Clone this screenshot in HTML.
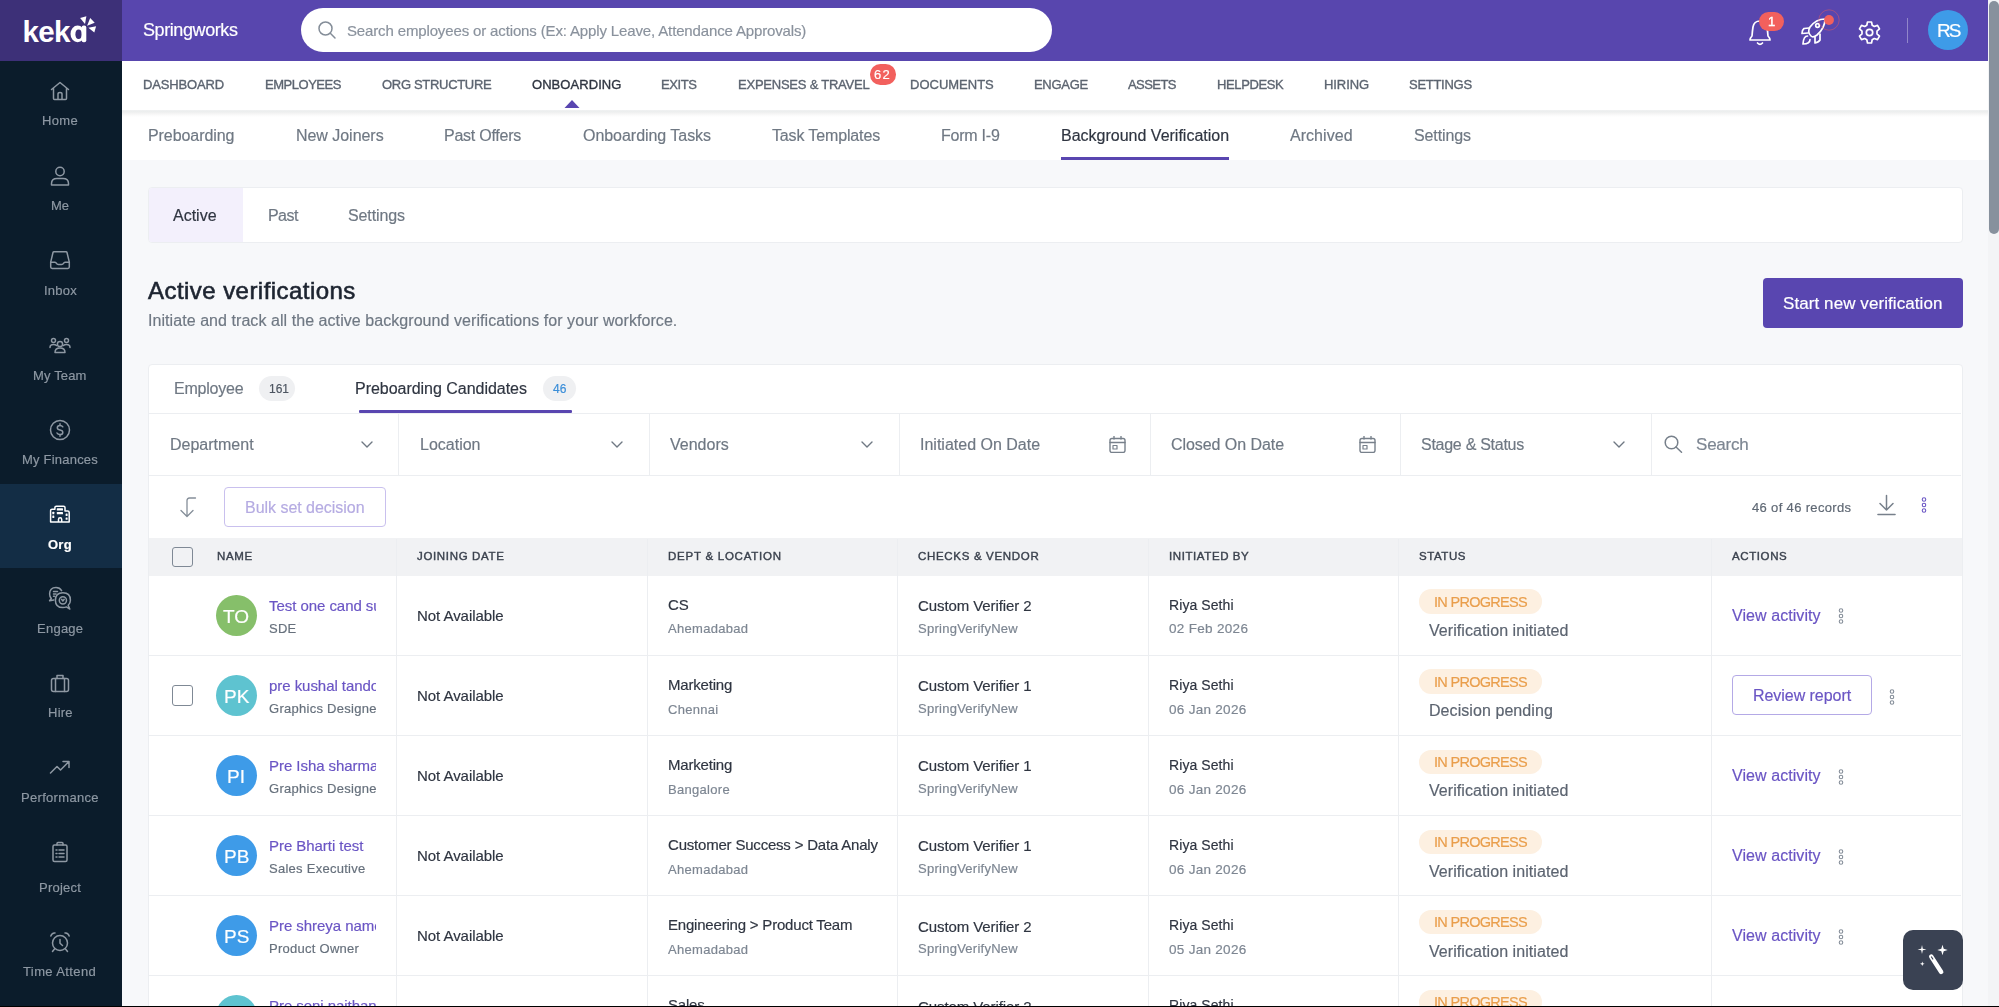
<!DOCTYPE html>
<html><head><meta charset="utf-8"><style>
html,body{margin:0;padding:0;width:1999px;height:1007px;overflow:hidden;background:#f7f8fa;}
body{position:relative;font-family:"Liberation Sans",sans-serif;}
.t{position:absolute;white-space:nowrap;line-height:1;-webkit-text-stroke:0.18px currentColor;will-change:transform;}
.b{position:absolute;}
</style></head><body>
<div class="b" style="left:0.0px;top:0.0px;width:1999.0px;height:1007.0px;background:#f7f8fa;"></div>
<div class="b" style="left:0.0px;top:0.0px;width:122.0px;height:1007.0px;background:#0b1c2b;"></div>
<div class="b" style="left:0.0px;top:0.0px;width:122.0px;height:61.0px;background:#3d3078;"></div>
<div class="b" style="left:0.0px;top:484.0px;width:122.0px;height:84.0px;background:#132d45;"></div>
<svg class="b" style="left:18.0px;top:10.0px;" width="84" height="40" viewBox="0 0 84 40" fill="none"><text x="4.5" y="32.2" font-family="Liberation Sans" font-weight="700" font-size="29.5" fill="#fff" letter-spacing="-0.6">kek</text><ellipse cx="59.6" cy="23.9" rx="7.1" ry="8.4" fill="#fff"/><ellipse cx="60.6" cy="24.2" rx="3.2" ry="4.8" fill="#3d3078"/><rect x="63.6" y="15.6" width="4.7" height="16.6" rx="2" fill="#fff"/><polygon points="62.1,8.1 68.4,6.3 67,14" fill="#fff"/><polygon points="72.2,7.9 76.7,12.8 69.1,15.8" fill="#fff"/><polygon points="70.4,17.8 78.1,16.2 76.3,22.5" fill="#fff"/></svg>
<svg class="b" style="left:48.0px;top:79.2px;" width="24" height="24" viewBox="0 0 24 24" fill="none"><g stroke="#8e98a3" stroke-width="1.5" stroke-linecap="round" stroke-linejoin="round"><path d="M3.5 10.5 L12 3.5 L20.5 10.5 M5.5 9 V19.5 Q5.5 20.5 6.5 20.5 H17.5 Q18.5 20.5 18.5 19.5 V9 M10 20.5 V15 Q10 13.5 12 13.5 Q14 13.5 14 15 V20.5"/></g></svg>
<div class="t" style="left:42.0px;top:114.0px;font-size:13px;color:#8e98a3;letter-spacing:0.33px;">Home</div>
<svg class="b" style="left:48.0px;top:164.2px;" width="24" height="24" viewBox="0 0 24 24" fill="none"><g stroke="#8e98a3" stroke-width="1.5" stroke-linecap="round" stroke-linejoin="round"><circle cx="12" cy="7.5" r="4.2"/><path d="M3.5 21 V19.5 Q3.5 14.5 9 14.5 H15 Q20.5 14.5 20.5 19.5 V21 Z"/></g></svg>
<div class="t" style="left:51.1px;top:199.0px;font-size:13px;color:#8e98a3;letter-spacing:-0.13px;">Me</div>
<svg class="b" style="left:48.0px;top:248.1px;" width="24" height="24" viewBox="0 0 24 24" fill="none"><g stroke="#8e98a3" stroke-width="1.5" stroke-linecap="round" stroke-linejoin="round"><path d="M6 3.7 H18 Q18.8 3.7 19 4.5 L21.3 14.2 V19 Q21.3 20.4 19.9 20.4 H4.1 Q2.7 20.4 2.7 19 V14.2 L5 4.5 Q5.2 3.7 6 3.7 Z"/><path d="M2.7 14.2 H7 Q7.9 14.2 8.5 15.4 Q9.1 16.5 10.3 16.5 H13.7 Q14.9 16.5 15.5 15.4 Q16.1 14.2 17 14.2 H21.3"/></g></svg>
<div class="t" style="left:43.5px;top:284.0px;font-size:13px;color:#8e98a3;letter-spacing:0.25px;">Inbox</div>
<svg class="b" style="left:48.0px;top:332.9px;" width="24" height="24" viewBox="0 0 24 24" fill="none"><g stroke="#8e98a3" stroke-width="1.5" stroke-linecap="round" stroke-linejoin="round"><circle cx="12" cy="11" r="2.6"/><circle cx="5.5" cy="7.5" r="2"/><circle cx="18.5" cy="7.5" r="2"/><path d="M7 19.5 Q7 15 12 15 Q17 15 17 19.5 Z M2 14.5 Q2 11.5 5.5 11.5 Q7.5 11.5 8.5 12.5 M22 14.5 Q22 11.5 18.5 11.5 Q16.5 11.5 15.5 12.5"/></g></svg>
<div class="t" style="left:33.2px;top:369.0px;font-size:13px;color:#8e98a3;letter-spacing:0.14px;">My Team</div>
<svg class="b" style="left:48.0px;top:418.0px;" width="24" height="24" viewBox="0 0 24 24" fill="none"><g stroke="#8e98a3" stroke-width="1.5" stroke-linecap="round" stroke-linejoin="round"><circle cx="12" cy="12" r="9.5"/><path d="M14.8 8.8 Q14 7.5 12 7.5 Q9.3 7.5 9.3 9.8 Q9.3 11.5 12 12 Q14.8 12.5 14.8 14.4 Q14.8 16.5 12 16.5 Q9.8 16.5 9 15 M12 5.8 V7.5 M12 16.5 V18.2"/></g></svg>
<div class="t" style="left:22.0px;top:453.0px;font-size:13px;color:#8e98a3;letter-spacing:0.21px;">My Finances</div>
<svg class="b" style="left:48.0px;top:501.5px;" width="24" height="24" viewBox="0 0 24 24" fill="none"><g stroke="#ffffff" stroke-width="1.5" stroke-linecap="round" stroke-linejoin="round"><path d="M2.6 20 V8.6 Q2.6 7.2 4 7.2 H6.9 V5.6 Q6.9 4.2 8.3 4.2 H15.6 Q17 4.2 17 5.6 V9 H19.8 Q21.2 9 21.2 10.4 V20 Z M10.5 20 V17.4 Q10.5 15.8 12.1 15.8 Q13.7 15.8 13.7 17.4 V20"/><g fill="#fff" stroke="none"><rect x="8.8" y="6.3" width="6.2" height="2.3" rx="0.6"/><rect x="8.8" y="10" width="6.2" height="2.3" rx="0.6"/><rect x="4.3" y="9.8" width="2" height="2.4" rx="0.5"/><rect x="4.3" y="13.6" width="2" height="2.4" rx="0.5"/><rect x="17.6" y="11.6" width="2" height="2.4" rx="0.5"/><rect x="17.6" y="15.4" width="2" height="2.4" rx="0.5"/></g></g></svg>
<div class="t" style="left:48.1px;top:538.0px;font-size:13px;color:#ffffff;letter-spacing:0.25px;font-weight:700;">Org</div>
<svg class="b" style="left:48.0px;top:586.2px;" width="24" height="24" viewBox="0 0 24 24" fill="none"><g stroke="#8e98a3" stroke-width="1.5" stroke-linecap="round" stroke-linejoin="round"><path d="M13.6 4.6 Q11.8 1.6 8 1.6 Q1.6 1.6 1.6 8 Q1.6 10.6 3.3 12.5 L1.6 14.8 L5.8 13.9"/><path d="M5.5 5.6 H9.5 M5.5 7.9 H8 M5.5 10.2 H6.5"/><path d="M21.8 23 L20.2 19.3 Q22.4 17.2 22.4 14.2 Q22.4 6.8 14.9 6.8 Q7.4 6.8 7.4 14.2 Q7.4 21.6 14.9 21.6 Q17 21.6 18.4 20.9 Z"/><circle cx="14.9" cy="14.3" r="3.6"/><path d="M13.6 13.3 L14.9 15 L16.2 13.3"/></g></svg>
<div class="t" style="left:36.8px;top:622.0px;font-size:13px;color:#8e98a3;letter-spacing:0.25px;">Engage</div>
<svg class="b" style="left:48.0px;top:670.8px;" width="24" height="24" viewBox="0 0 24 24" fill="none"><g stroke="#8e98a3" stroke-width="1.5" stroke-linecap="round" stroke-linejoin="round"><rect x="3.5" y="7.5" width="17" height="13" rx="2"/><path d="M9 7.5 V4.5 H15 V7.5 M7.5 7.5 V20.5 M16.5 7.5 V20.5"/></g></svg>
<div class="t" style="left:47.6px;top:706.0px;font-size:13px;color:#8e98a3;letter-spacing:0.25px;">Hire</div>
<svg class="b" style="left:48.0px;top:755.4px;" width="24" height="24" viewBox="0 0 24 24" fill="none"><g stroke="#8e98a3" stroke-width="1.5" stroke-linecap="round" stroke-linejoin="round"><path d="M2.5 18 L9 11.5 L12.5 15 L20.5 7 M15 6.5 H21 V12.5"/></g></svg>
<div class="t" style="left:21.1px;top:791.0px;font-size:13px;color:#8e98a3;letter-spacing:0.31px;">Performance</div>
<svg class="b" style="left:48.0px;top:840.0px;" width="24" height="24" viewBox="0 0 24 24" fill="none"><g stroke="#8e98a3" stroke-width="1.5" stroke-linecap="round" stroke-linejoin="round"><rect x="5" y="5" width="14" height="16.5" rx="1.5"/><path d="M9 5 V3.5 Q9 2.5 10 2.5 H14 Q15 2.5 15 3.5 V5 M8 10 H9 M11 10 H16 M8 13.5 H9 M11 13.5 H16 M8 17 H9 M11 17 H16"/></g></svg>
<div class="t" style="left:39.0px;top:881.0px;font-size:13px;color:#8e98a3;letter-spacing:0.22px;">Project</div>
<svg class="b" style="left:48.0px;top:929.8px;" width="24" height="24" viewBox="0 0 24 24" fill="none"><g stroke="#8e98a3" stroke-width="1.5" stroke-linecap="round" stroke-linejoin="round"><circle cx="12" cy="13" r="7.5"/><path d="M12 9.5 V13.3 L14.5 15.5 M2.8 6 Q4 2.5 7 3 M21.2 6 Q20 2.5 17 3 M6.5 19 L4.5 21.5 M17.5 19 L19.5 21.5"/></g></svg>
<div class="t" style="left:23.4px;top:965.0px;font-size:13px;color:#8e98a3;letter-spacing:0.39px;">Time Attend</div>
<div class="b" style="left:122.0px;top:0.0px;width:1866.0px;height:61.0px;background:#5846ae;"></div>
<div class="t" style="left:142.8px;top:21.0px;font-size:18px;color:#ffffff;letter-spacing:-0.41px;">Springworks</div>
<div class="b" style="left:300.5px;top:8.0px;width:751.0px;height:44.0px;background:#fff;border-radius:22px;"></div>
<svg class="b" style="left:317.0px;top:20.0px;" width="20" height="20" viewBox="0 0 20 20" fill="none"><g stroke="#848d98" stroke-width="1.5" stroke-linecap="round"><circle cx="8.5" cy="8.5" r="6.5"/><path d="M13.3 13.3 L18 18"/></g></svg>
<div class="t" style="left:346.5px;top:23.0px;font-size:15px;color:#8a929d;letter-spacing:-0.14px;">Search employees or actions (Ex: Apply Leave, Attendance Approvals)</div>
<svg class="b" style="left:1746.0px;top:17.0px;" width="28" height="30" viewBox="0 0 28 30" fill="none"><g stroke="#fff" stroke-width="1.7" stroke-linecap="round" stroke-linejoin="round"><path d="M4 23 H24 Q24 21 22 19 Q21.5 13 21 10 Q20 4 14 4 Q8 4 7 10 Q6.5 13 6 19 Q4 21 4 23 Z"/><path d="M11.5 26 Q14 28.5 16.5 26"/></g></svg>
<div class="b" style="left:1759.0px;top:12.0px;width:25.0px;height:19.0px;background:#f2605d;border-radius:10px;"></div>
<div class="t" style="left:1767.8px;top:15.0px;font-size:13px;color:#fff;-webkit-text-stroke:0.4px #fff;">1</div>
<svg class="b" style="left:1798.0px;top:14.0px;" width="34" height="34" viewBox="0 0 34 34" fill="none"><g stroke="#fff" stroke-width="1.7" stroke-linecap="round" stroke-linejoin="round"><path d="M13 22 Q9 18 12 13 Q18 5 27 5 Q27 14 19 21 Q15 24 13 22 Z"/><circle cx="19.5" cy="11.5" r="1.8"/><path d="M11 14 L6 14.5 Q4 16 4 19.5 L10 19"/><path d="M17 23 L17 29 Q21 28 22 26 L22 20"/><path d="M9.5 22 Q5.5 22 5 30 Q12 30 12 25.5"/></g></svg>
<svg class="b" style="left:1817.0px;top:8.0px;" width="24" height="24" viewBox="0 0 24 24" fill="none"><circle cx="12" cy="12" r="10.2" stroke="rgba(240,90,90,0.45)" stroke-width="1"/><circle cx="12" cy="12" r="4.9" fill="#f2605d"/></svg>
<svg class="b" style="left:1857.0px;top:20.0px;" width="25" height="25" viewBox="0 0 25 25" fill="none"><g stroke="#fff" stroke-width="1.7" stroke-linejoin="round"><path d="M10.5 2 H14.5 L15.2 5.3 L17.3 6.5 L20.5 5.4 L22.5 8.9 L20 11.1 V13.9 L22.5 16.1 L20.5 19.6 L17.3 18.5 L15.2 19.7 L14.5 23 H10.5 L9.8 19.7 L7.7 18.5 L4.5 19.6 L2.5 16.1 L5 13.9 V11.1 L2.5 8.9 L4.5 5.4 L7.7 6.5 L9.8 5.3 Z"/><circle cx="12.5" cy="12.5" r="3.2"/></g></svg>
<div class="b" style="left:1907.0px;top:17.5px;width:1.2px;height:25.0px;background:rgba(255,255,255,0.35);"></div>
<div class="b" style="left:1928.0px;top:10.0px;width:40.0px;height:40.0px;background:#3e9be8;border-radius:50%;"></div>
<div class="t" style="left:1936.8px;top:21.0px;font-size:19px;color:#fff;letter-spacing:-1.95px;">RS</div>
<div class="b" style="left:122.0px;top:61.0px;width:1866.0px;height:49.0px;background:#fff;"></div>
<div class="t" style="left:143.0px;top:78.0px;font-size:13px;color:#5c6470;letter-spacing:-0.15px;z-index:2;-webkit-text-stroke:0.35px #5c6470;">DASHBOARD</div>
<div class="t" style="left:265.0px;top:78.0px;font-size:13px;color:#5c6470;letter-spacing:-0.47px;z-index:2;-webkit-text-stroke:0.35px #5c6470;">EMPLOYEES</div>
<div class="t" style="left:381.6px;top:78.0px;font-size:13px;color:#5c6470;letter-spacing:-0.31px;z-index:2;-webkit-text-stroke:0.35px #5c6470;">ORG STRUCTURE</div>
<div class="t" style="left:531.6px;top:78.0px;font-size:13px;color:#2f3541;letter-spacing:0.06px;z-index:2;-webkit-text-stroke:0.35px #2f3541;">ONBOARDING</div>
<div class="t" style="left:661.4px;top:78.0px;font-size:13px;color:#5c6470;letter-spacing:-0.39px;z-index:2;-webkit-text-stroke:0.35px #5c6470;">EXITS</div>
<div class="t" style="left:737.6px;top:78.0px;font-size:13px;color:#5c6470;letter-spacing:-0.23px;z-index:2;-webkit-text-stroke:0.35px #5c6470;">EXPENSES &amp; TRAVEL</div>
<div class="t" style="left:909.6px;top:78.0px;font-size:13px;color:#5c6470;z-index:2;-webkit-text-stroke:0.35px #5c6470;">DOCUMENTS</div>
<div class="t" style="left:1033.6px;top:78.0px;font-size:13px;color:#5c6470;letter-spacing:-0.30px;z-index:2;-webkit-text-stroke:0.35px #5c6470;">ENGAGE</div>
<div class="t" style="left:1128.0px;top:78.0px;font-size:13px;color:#5c6470;letter-spacing:-0.55px;z-index:2;-webkit-text-stroke:0.35px #5c6470;">ASSETS</div>
<div class="t" style="left:1217.0px;top:78.0px;font-size:13px;color:#5c6470;letter-spacing:-0.37px;z-index:2;-webkit-text-stroke:0.35px #5c6470;">HELPDESK</div>
<div class="t" style="left:1324.0px;top:78.0px;font-size:13px;color:#5c6470;letter-spacing:-0.08px;z-index:2;-webkit-text-stroke:0.35px #5c6470;">HIRING</div>
<div class="t" style="left:1408.6px;top:78.0px;font-size:13px;color:#5c6470;letter-spacing:-0.28px;z-index:2;-webkit-text-stroke:0.35px #5c6470;">SETTINGS</div>
<svg class="b" style="left:563.6px;top:99.5px;z-index:2;" width="16" height="8.5" viewBox="0 0 16 8.5" fill="none"><polygon points="0,8.5 8,0 16,8.5" fill="#5946b0"/></svg>
<div class="b" style="left:869.6px;top:64.4px;width:26.4px;height:20.6px;background:#f2605d;border-radius:10.3px;z-index:2;"></div>
<div class="t" style="left:874.2px;top:68.0px;font-size:13px;color:#fff;letter-spacing:1.27px;z-index:2;">62</div>
<div class="b" style="left:122.0px;top:110.0px;width:1866.0px;height:50.0px;background:#fff;"></div>
<div class="t" style="left:148.0px;top:128.0px;font-size:16px;color:#6f7883;letter-spacing:-0.07px;">Preboarding</div>
<div class="t" style="left:296.0px;top:128.0px;font-size:16px;color:#6f7883;letter-spacing:-0.04px;">New Joiners</div>
<div class="t" style="left:444.4px;top:128.0px;font-size:16px;color:#6f7883;letter-spacing:-0.25px;">Past Offers</div>
<div class="t" style="left:583.0px;top:128.0px;font-size:16px;color:#6f7883;letter-spacing:-0.04px;">Onboarding Tasks</div>
<div class="t" style="left:772.0px;top:128.0px;font-size:16px;color:#6f7883;letter-spacing:-0.14px;">Task Templates</div>
<div class="t" style="left:941.4px;top:128.0px;font-size:16px;color:#6f7883;letter-spacing:-0.23px;">Form I-9</div>
<div class="t" style="left:1061.0px;top:128.0px;font-size:16px;color:#2f3541;">Background Verification</div>
<div class="t" style="left:1290.4px;top:128.0px;font-size:16px;color:#6f7883;letter-spacing:0.04px;">Archived</div>
<div class="t" style="left:1413.6px;top:128.0px;font-size:16px;color:#6f7883;letter-spacing:-0.10px;">Settings</div>
<div class="b" style="left:1061.0px;top:157.3px;width:168.0px;height:2.7px;background:#5946b0;"></div>
<div class="b" style="left:122.0px;top:110.0px;width:1866.0px;height:7.0px;background:linear-gradient(#f0f1f2 0%,#eceeee 25%,#f4f4f4 50%,#fafafa 75%,rgba(255,255,255,0) 100%);"></div>
<div class="b" style="left:147.5px;top:186.5px;width:1815.2px;height:56.0px;background:#fff;border:1px solid #eceef1;border-radius:4px;box-sizing:border-box;"></div>
<div class="b" style="left:148.5px;top:187.5px;width:94.5px;height:54.0px;background:#f3f0fc;border-radius:3px 0 0 3px;"></div>
<div class="t" style="left:173.4px;top:208.0px;font-size:16px;color:#2f3541;">Active</div>
<div class="t" style="left:268.0px;top:208.0px;font-size:16px;color:#6f7883;letter-spacing:-0.55px;">Past</div>
<div class="t" style="left:348.0px;top:208.0px;font-size:16px;color:#6f7883;letter-spacing:-0.10px;">Settings</div>
<div class="t" style="left:147.6px;top:279.0px;font-size:24px;color:#1d2430;letter-spacing:0.45px;-webkit-text-stroke:0.6px #1d2430;">Active verifications</div>
<div class="t" style="left:147.6px;top:313.0px;font-size:16px;color:#6f7883;letter-spacing:0.06px;">Initiate and track all the active background verifications for your workforce.</div>
<div class="b" style="left:1763.0px;top:278.0px;width:199.5px;height:49.5px;background:#5946b0;border-radius:4px;"></div>
<div class="t" style="left:1782.5px;top:295.0px;font-size:17px;color:#fff;letter-spacing:0.08px;">Start new verification</div>
<div class="b" style="left:147.5px;top:363.5px;width:1815.2px;height:700.0px;background:#fff;border:1px solid #eceef1;border-radius:4px;box-sizing:border-box;"></div>
<div class="t" style="left:173.8px;top:381.0px;font-size:16px;color:#6f7883;letter-spacing:-0.21px;">Employee</div>
<div class="b" style="left:258.8px;top:376.0px;width:35.8px;height:24.8px;background:#eff0f2;border-radius:12.4px;"></div>
<div class="t" style="left:268.8px;top:383.0px;font-size:12px;color:#4d5561;">161</div>
<div class="t" style="left:355.0px;top:381.0px;font-size:16px;color:#2f3541;letter-spacing:-0.03px;">Preboarding Candidates</div>
<div class="b" style="left:542.5px;top:376.0px;width:33.8px;height:24.8px;background:#eff0f2;border-radius:12.4px;"></div>
<div class="t" style="left:552.6px;top:383.0px;font-size:12px;color:#3b8ed8;">46</div>
<div class="b" style="left:359.0px;top:410.0px;width:213.0px;height:3.0px;background:#5946b0;border-radius:1px;"></div>
<div class="b" style="left:148.5px;top:413.0px;width:1812.5px;height:1.0px;background:#eceef1;"></div>
<div class="b" style="left:148.5px;top:475.0px;width:1812.5px;height:1.0px;background:#eceef1;"></div>
<div class="b" style="left:398.0px;top:414.0px;width:1.0px;height:61.0px;background:#eceef1;"></div>
<div class="b" style="left:649.0px;top:414.0px;width:1.0px;height:61.0px;background:#eceef1;"></div>
<div class="b" style="left:899.0px;top:414.0px;width:1.0px;height:61.0px;background:#eceef1;"></div>
<div class="b" style="left:1150.0px;top:414.0px;width:1.0px;height:61.0px;background:#eceef1;"></div>
<div class="b" style="left:1400.0px;top:414.0px;width:1.0px;height:61.0px;background:#eceef1;"></div>
<div class="b" style="left:1650.5px;top:414.0px;width:1.0px;height:61.0px;background:#eceef1;"></div>
<div class="t" style="left:169.5px;top:437.0px;font-size:16px;color:#6f7883;">Department</div>
<svg class="b" style="left:361.0px;top:441.0px;" width="12" height="7.5" viewBox="0 0 12 7.5" fill="none"><path d="M1 1 L6 6 L11 1" stroke="#6f7883" stroke-width="1.4" stroke-linecap="round" stroke-linejoin="round"/></svg>
<div class="t" style="left:419.5px;top:437.0px;font-size:16px;color:#6f7883;">Location</div>
<svg class="b" style="left:611.0px;top:441.0px;" width="12" height="7.5" viewBox="0 0 12 7.5" fill="none"><path d="M1 1 L6 6 L11 1" stroke="#6f7883" stroke-width="1.4" stroke-linecap="round" stroke-linejoin="round"/></svg>
<div class="t" style="left:669.5px;top:437.0px;font-size:16px;color:#6f7883;">Vendors</div>
<svg class="b" style="left:861.0px;top:441.0px;" width="12" height="7.5" viewBox="0 0 12 7.5" fill="none"><path d="M1 1 L6 6 L11 1" stroke="#6f7883" stroke-width="1.4" stroke-linecap="round" stroke-linejoin="round"/></svg>
<div class="t" style="left:920.0px;top:437.0px;font-size:16px;color:#6f7883;">Initiated On Date</div>
<svg class="b" style="left:1109.0px;top:435.8px;" width="17" height="17.5" viewBox="0 0 17 17.5" fill="none"><g stroke="#77808b" stroke-width="1.4" stroke-linejoin="round"><rect x="1" y="2.5" width="15" height="14" rx="2"/><path d="M1 6.5 H16 M5 0.5 V3 M12 0.5 V3" stroke-linecap="round"/><rect x="4" y="9.5" width="4" height="3.5" stroke-width="1.2"/></g></svg>
<div class="t" style="left:1170.6px;top:437.0px;font-size:16px;color:#6f7883;letter-spacing:-0.06px;">Closed On Date</div>
<svg class="b" style="left:1359.0px;top:435.8px;" width="17" height="17.5" viewBox="0 0 17 17.5" fill="none"><g stroke="#77808b" stroke-width="1.4" stroke-linejoin="round"><rect x="1" y="2.5" width="15" height="14" rx="2"/><path d="M1 6.5 H16 M5 0.5 V3 M12 0.5 V3" stroke-linecap="round"/><rect x="4" y="9.5" width="4" height="3.5" stroke-width="1.2"/></g></svg>
<div class="t" style="left:1421.0px;top:437.0px;font-size:16px;color:#6f7883;letter-spacing:-0.27px;">Stage &amp; Status</div>
<svg class="b" style="left:1613.0px;top:441.0px;" width="12" height="7.5" viewBox="0 0 12 7.5" fill="none"><path d="M1 1 L6 6 L11 1" stroke="#6f7883" stroke-width="1.4" stroke-linecap="round" stroke-linejoin="round"/></svg>
<svg class="b" style="left:1663.5px;top:434.5px;" width="19" height="18" viewBox="0 0 19 18" fill="none"><g stroke="#77808b" stroke-width="1.5" stroke-linecap="round"><circle cx="7.5" cy="7.5" r="6.3"/><path d="M12 12 L17.5 17.2"/></g></svg>
<div class="t" style="left:1696.4px;top:436.0px;font-size:17px;color:#7d8692;letter-spacing:-0.21px;">Search</div>
<svg class="b" style="left:178.0px;top:496.0px;" width="20" height="22" viewBox="0 0 20 22" fill="none"><g stroke="#858e99" stroke-width="1.3" stroke-linecap="round" stroke-linejoin="round"><path d="M9 20 V4.5 Q9 2 11.5 2 H17.5 M3 14.5 L9 20.5 L15 14.5"/></g></svg>
<div class="b" style="left:223.8px;top:487.0px;width:162.5px;height:39.8px;border:1px solid #c9c0ee;border-radius:4px;box-sizing:border-box;background:#fff;"></div>
<div class="t" style="left:245.0px;top:500.0px;font-size:16px;color:#b5abe2;letter-spacing:-0.03px;">Bulk set decision</div>
<div class="t" style="left:1751.6px;top:501.0px;font-size:13px;color:#5f6874;letter-spacing:0.34px;">46 of 46 records</div>
<svg class="b" style="left:1876.0px;top:493.5px;" width="21" height="22" viewBox="0 0 21 22" fill="none"><g stroke="#77808b" stroke-width="1.5" stroke-linecap="round" stroke-linejoin="round"><path d="M10.5 1.5 V16 M4 9.5 L10.5 16 L17 9.5"/><path d="M2 20.5 H19" stroke-width="1.6"/></g></svg>
<svg class="b" style="left:1920.0px;top:496.0px;" width="8" height="18" viewBox="0 0 8 18" fill="none"><g stroke="#6a55c4" stroke-width="1.1"><circle cx="4" cy="3.5" r="1.75"/><circle cx="4" cy="9" r="1.75"/><circle cx="4" cy="14.5" r="1.75"/></g></svg>
<div class="b" style="left:148.5px;top:538.0px;width:1813.5px;height:38.0px;background:#f1f2f4;"></div>
<div class="b" style="left:396.0px;top:538.5px;width:1.0px;height:470.0px;background:#eceef1;"></div>
<div class="b" style="left:647.0px;top:538.5px;width:1.0px;height:470.0px;background:#eceef1;"></div>
<div class="b" style="left:897.0px;top:538.5px;width:1.0px;height:470.0px;background:#eceef1;"></div>
<div class="b" style="left:1148.0px;top:538.5px;width:1.0px;height:470.0px;background:#eceef1;"></div>
<div class="b" style="left:1398.0px;top:538.5px;width:1.0px;height:470.0px;background:#eceef1;"></div>
<div class="b" style="left:1711.0px;top:538.5px;width:1.0px;height:470.0px;background:#eceef1;"></div>
<div class="b" style="left:172.3px;top:546.7px;width:21.0px;height:20.5px;border:1.7px solid #7f8995;border-radius:3px;box-sizing:border-box;background:transparent;"></div>
<div class="t" style="left:216.7px;top:551.0px;font-size:11.5px;color:#3b424e;letter-spacing:0.69px;-webkit-text-stroke:0.4px #3b424e;">NAME</div>
<div class="t" style="left:417.4px;top:551.0px;font-size:11.5px;color:#3b424e;letter-spacing:0.66px;-webkit-text-stroke:0.4px #3b424e;">JOINING DATE</div>
<div class="t" style="left:667.7px;top:551.0px;font-size:11.5px;color:#3b424e;letter-spacing:0.75px;-webkit-text-stroke:0.4px #3b424e;">DEPT &amp; LOCATION</div>
<div class="t" style="left:918.3px;top:551.0px;font-size:11.5px;color:#3b424e;letter-spacing:0.68px;-webkit-text-stroke:0.4px #3b424e;">CHECKS &amp; VENDOR</div>
<div class="t" style="left:1168.6px;top:551.0px;font-size:11.5px;color:#3b424e;letter-spacing:0.59px;-webkit-text-stroke:0.4px #3b424e;">INITIATED BY</div>
<div class="t" style="left:1418.8px;top:551.0px;font-size:11.5px;color:#3b424e;letter-spacing:0.56px;-webkit-text-stroke:0.4px #3b424e;">STATUS</div>
<div class="t" style="left:1732.0px;top:551.0px;font-size:11.5px;color:#3b424e;letter-spacing:0.60px;-webkit-text-stroke:0.4px #3b424e;">ACTIONS</div>
<div class="b" style="left:216.0px;top:594.9px;width:40.8px;height:40.8px;background:#86bf6a;border-radius:50%;"></div>
<div class="t" style="left:223.4px;top:607.0px;font-size:19px;color:#fff;">TO</div>
<div class="t" style="left:269.3px;top:598.0px;font-size:15px;color:#6a55c4;letter-spacing:-0.05px;width:107.4px;height:20.2px;overflow:hidden;">Test one cand sumit</div>
<div class="t" style="left:269.3px;top:622.0px;font-size:13px;color:#66707c;letter-spacing:0.27px;width:107.4px;height:17.6px;overflow:hidden;">SDE</div>
<div class="t" style="left:417.4px;top:608.0px;font-size:15px;color:#2f3541;letter-spacing:-0.05px;">Not Available</div>
<div class="t" style="left:667.7px;top:597.0px;font-size:15px;color:#2f3541;letter-spacing:-0.20px;width:210.0px;height:20.2px;overflow:hidden;">CS</div>
<div class="t" style="left:667.7px;top:622.0px;font-size:13px;color:#7d8692;letter-spacing:0.30px;">Ahemadabad</div>
<div class="t" style="left:918.3px;top:598.0px;font-size:15px;color:#2f3541;letter-spacing:-0.09px;">Custom Verifier 2</div>
<div class="t" style="left:918.3px;top:622.0px;font-size:13px;color:#7d8692;letter-spacing:0.26px;">SpringVerifyNew</div>
<div class="t" style="left:1168.6px;top:598.0px;font-size:14px;color:#2f3541;letter-spacing:0.08px;">Riya Sethi</div>
<div class="t" style="left:1168.6px;top:622.0px;font-size:13.5px;color:#7d8692;letter-spacing:0.31px;">02 Feb 2026</div>
<div class="b" style="left:1419.0px;top:589.3px;width:122.5px;height:24.4px;background:#fdf0e1;border-radius:12.2px;"></div>
<div class="t" style="left:1434.0px;top:595.0px;font-size:14.5px;color:#e99e4c;letter-spacing:-0.70px;">IN PROGRESS</div>
<div class="t" style="left:1429.3px;top:623.0px;font-size:16px;color:#5c6470;letter-spacing:0.07px;">Verification initiated</div>
<div class="t" style="left:1732.0px;top:608.0px;font-size:16px;color:#6a55c4;letter-spacing:0.07px;">View activity</div>
<svg class="b" style="left:1837.0px;top:607.4px;" width="8" height="18" viewBox="0 0 8 18" fill="none"><g stroke="#848d98" stroke-width="1.1"><circle cx="4" cy="3.5" r="1.75"/><circle cx="4" cy="9" r="1.75"/><circle cx="4" cy="14.5" r="1.75"/></g></svg>
<div class="b" style="left:148.5px;top:655.0px;width:1812.5px;height:1.0px;background:#eceef1;"></div>
<div class="b" style="left:216.0px;top:675.0px;width:40.8px;height:40.8px;background:#5ec3d0;border-radius:50%;"></div>
<div class="t" style="left:223.7px;top:687.0px;font-size:19px;color:#fff;">PK</div>
<div class="t" style="left:269.3px;top:678.0px;font-size:15px;color:#6a55c4;letter-spacing:-0.05px;width:107.4px;height:20.2px;overflow:hidden;">pre kushal tandon</div>
<div class="t" style="left:269.3px;top:702.0px;font-size:13px;color:#66707c;letter-spacing:0.27px;width:107.4px;height:17.6px;overflow:hidden;">Graphics Designer</div>
<div class="t" style="left:417.4px;top:688.0px;font-size:15px;color:#2f3541;letter-spacing:-0.05px;">Not Available</div>
<div class="t" style="left:667.7px;top:677.0px;font-size:15px;color:#2f3541;letter-spacing:-0.20px;width:210.0px;height:20.2px;overflow:hidden;">Marketing</div>
<div class="t" style="left:667.7px;top:703.0px;font-size:13px;color:#7d8692;letter-spacing:0.30px;">Chennai</div>
<div class="t" style="left:918.3px;top:678.0px;font-size:15px;color:#2f3541;letter-spacing:-0.09px;">Custom Verifier 1</div>
<div class="t" style="left:918.3px;top:702.0px;font-size:13px;color:#7d8692;letter-spacing:0.26px;">SpringVerifyNew</div>
<div class="t" style="left:1168.6px;top:678.0px;font-size:14px;color:#2f3541;letter-spacing:0.08px;">Riya Sethi</div>
<div class="t" style="left:1168.6px;top:703.0px;font-size:13.5px;color:#7d8692;letter-spacing:0.29px;">06 Jan 2026</div>
<div class="b" style="left:1419.0px;top:669.4px;width:122.5px;height:24.4px;background:#fdf0e1;border-radius:12.2px;"></div>
<div class="t" style="left:1434.0px;top:675.0px;font-size:14.5px;color:#e99e4c;letter-spacing:-0.70px;">IN PROGRESS</div>
<div class="t" style="left:1429.3px;top:703.0px;font-size:16px;color:#5c6470;letter-spacing:0.07px;">Decision pending</div>
<div class="b" style="left:1731.6px;top:675.3px;width:140.2px;height:40.2px;border:1.6px solid #b4a9e6;border-radius:4px;box-sizing:border-box;background:#fff;"></div>
<div class="t" style="left:1753.0px;top:688.0px;font-size:16px;color:#6a55c4;letter-spacing:-0.05px;">Review report</div>
<svg class="b" style="left:1888.0px;top:687.5px;" width="8" height="18" viewBox="0 0 8 18" fill="none"><g stroke="#848d98" stroke-width="1.1"><circle cx="4" cy="3.5" r="1.75"/><circle cx="4" cy="9" r="1.75"/><circle cx="4" cy="14.5" r="1.75"/></g></svg>
<div class="b" style="left:172.3px;top:685.1px;width:21.0px;height:20.5px;border:1.7px solid #7f8995;border-radius:3px;box-sizing:border-box;background:#fff;"></div>
<div class="b" style="left:148.5px;top:735.0px;width:1812.5px;height:1.0px;background:#eceef1;"></div>
<div class="b" style="left:216.0px;top:755.1px;width:40.8px;height:40.8px;background:#3e9be8;border-radius:50%;"></div>
<div class="t" style="left:227.4px;top:767.0px;font-size:19px;color:#fff;">PI</div>
<div class="t" style="left:269.3px;top:758.0px;font-size:15px;color:#6a55c4;letter-spacing:-0.05px;width:107.4px;height:20.2px;overflow:hidden;">Pre Isha sharma</div>
<div class="t" style="left:269.3px;top:782.0px;font-size:13px;color:#66707c;letter-spacing:0.27px;width:107.4px;height:17.6px;overflow:hidden;">Graphics Designer</div>
<div class="t" style="left:417.4px;top:768.0px;font-size:15px;color:#2f3541;letter-spacing:-0.05px;">Not Available</div>
<div class="t" style="left:667.7px;top:757.0px;font-size:15px;color:#2f3541;letter-spacing:-0.20px;width:210.0px;height:20.2px;overflow:hidden;">Marketing</div>
<div class="t" style="left:667.7px;top:783.0px;font-size:13px;color:#7d8692;letter-spacing:0.30px;">Bangalore</div>
<div class="t" style="left:918.3px;top:758.0px;font-size:15px;color:#2f3541;letter-spacing:-0.09px;">Custom Verifier 1</div>
<div class="t" style="left:918.3px;top:782.0px;font-size:13px;color:#7d8692;letter-spacing:0.26px;">SpringVerifyNew</div>
<div class="t" style="left:1168.6px;top:758.0px;font-size:14px;color:#2f3541;letter-spacing:0.08px;">Riya Sethi</div>
<div class="t" style="left:1168.6px;top:783.0px;font-size:13.5px;color:#7d8692;letter-spacing:0.29px;">06 Jan 2026</div>
<div class="b" style="left:1419.0px;top:749.5px;width:122.5px;height:24.4px;background:#fdf0e1;border-radius:12.2px;"></div>
<div class="t" style="left:1434.0px;top:755.0px;font-size:14.5px;color:#e99e4c;letter-spacing:-0.70px;">IN PROGRESS</div>
<div class="t" style="left:1429.3px;top:783.0px;font-size:16px;color:#5c6470;letter-spacing:0.07px;">Verification initiated</div>
<div class="t" style="left:1732.0px;top:768.0px;font-size:16px;color:#6a55c4;letter-spacing:0.07px;">View activity</div>
<svg class="b" style="left:1837.0px;top:767.6px;" width="8" height="18" viewBox="0 0 8 18" fill="none"><g stroke="#848d98" stroke-width="1.1"><circle cx="4" cy="3.5" r="1.75"/><circle cx="4" cy="9" r="1.75"/><circle cx="4" cy="14.5" r="1.75"/></g></svg>
<div class="b" style="left:148.5px;top:815.0px;width:1812.5px;height:1.0px;background:#eceef1;"></div>
<div class="b" style="left:216.0px;top:835.2px;width:40.8px;height:40.8px;background:#3e9be8;border-radius:50%;"></div>
<div class="t" style="left:223.7px;top:847.0px;font-size:19px;color:#fff;">PB</div>
<div class="t" style="left:269.3px;top:838.0px;font-size:15px;color:#6a55c4;letter-spacing:-0.05px;width:107.4px;height:20.2px;overflow:hidden;">Pre Bharti test</div>
<div class="t" style="left:269.3px;top:862.0px;font-size:13px;color:#66707c;letter-spacing:0.27px;width:107.4px;height:17.6px;overflow:hidden;">Sales Executive</div>
<div class="t" style="left:417.4px;top:848.0px;font-size:15px;color:#2f3541;letter-spacing:-0.05px;">Not Available</div>
<div class="t" style="left:667.7px;top:837.0px;font-size:15px;color:#2f3541;letter-spacing:-0.20px;width:210.0px;height:20.2px;overflow:hidden;">Customer Success &gt; Data Analyst</div>
<div class="t" style="left:667.7px;top:863.0px;font-size:13px;color:#7d8692;letter-spacing:0.30px;">Ahemadabad</div>
<div class="t" style="left:918.3px;top:838.0px;font-size:15px;color:#2f3541;letter-spacing:-0.09px;">Custom Verifier 1</div>
<div class="t" style="left:918.3px;top:862.0px;font-size:13px;color:#7d8692;letter-spacing:0.26px;">SpringVerifyNew</div>
<div class="t" style="left:1168.6px;top:838.0px;font-size:14px;color:#2f3541;letter-spacing:0.08px;">Riya Sethi</div>
<div class="t" style="left:1168.6px;top:863.0px;font-size:13.5px;color:#7d8692;letter-spacing:0.29px;">06 Jan 2026</div>
<div class="b" style="left:1419.0px;top:829.6px;width:122.5px;height:24.4px;background:#fdf0e1;border-radius:12.2px;"></div>
<div class="t" style="left:1434.0px;top:835.0px;font-size:14.5px;color:#e99e4c;letter-spacing:-0.70px;">IN PROGRESS</div>
<div class="t" style="left:1429.3px;top:864.0px;font-size:16px;color:#5c6470;letter-spacing:0.07px;">Verification initiated</div>
<div class="t" style="left:1732.0px;top:848.0px;font-size:16px;color:#6a55c4;letter-spacing:0.07px;">View activity</div>
<svg class="b" style="left:1837.0px;top:847.7px;" width="8" height="18" viewBox="0 0 8 18" fill="none"><g stroke="#848d98" stroke-width="1.1"><circle cx="4" cy="3.5" r="1.75"/><circle cx="4" cy="9" r="1.75"/><circle cx="4" cy="14.5" r="1.75"/></g></svg>
<div class="b" style="left:148.5px;top:895.0px;width:1812.5px;height:1.0px;background:#eceef1;"></div>
<div class="b" style="left:216.0px;top:915.3px;width:40.8px;height:40.8px;background:#3e9be8;border-radius:50%;"></div>
<div class="t" style="left:223.7px;top:927.0px;font-size:19px;color:#fff;">PS</div>
<div class="t" style="left:269.3px;top:918.0px;font-size:15px;color:#6a55c4;letter-spacing:-0.05px;width:107.4px;height:20.2px;overflow:hidden;">Pre shreya name</div>
<div class="t" style="left:269.3px;top:942.0px;font-size:13px;color:#66707c;letter-spacing:0.27px;width:107.4px;height:17.6px;overflow:hidden;">Product Owner</div>
<div class="t" style="left:417.4px;top:928.0px;font-size:15px;color:#2f3541;letter-spacing:-0.05px;">Not Available</div>
<div class="t" style="left:667.7px;top:917.0px;font-size:15px;color:#2f3541;letter-spacing:-0.20px;width:210.0px;height:20.2px;overflow:hidden;">Engineering &gt; Product Team</div>
<div class="t" style="left:667.7px;top:943.0px;font-size:13px;color:#7d8692;letter-spacing:0.30px;">Ahemadabad</div>
<div class="t" style="left:918.3px;top:919.0px;font-size:15px;color:#2f3541;letter-spacing:-0.09px;">Custom Verifier 2</div>
<div class="t" style="left:918.3px;top:942.0px;font-size:13px;color:#7d8692;letter-spacing:0.26px;">SpringVerifyNew</div>
<div class="t" style="left:1168.6px;top:918.0px;font-size:14px;color:#2f3541;letter-spacing:0.08px;">Riya Sethi</div>
<div class="t" style="left:1168.6px;top:943.0px;font-size:13.5px;color:#7d8692;letter-spacing:0.29px;">05 Jan 2026</div>
<div class="b" style="left:1419.0px;top:909.7px;width:122.5px;height:24.4px;background:#fdf0e1;border-radius:12.2px;"></div>
<div class="t" style="left:1434.0px;top:915.0px;font-size:14.5px;color:#e99e4c;letter-spacing:-0.70px;">IN PROGRESS</div>
<div class="t" style="left:1429.3px;top:944.0px;font-size:16px;color:#5c6470;letter-spacing:0.07px;">Verification initiated</div>
<div class="t" style="left:1732.0px;top:928.0px;font-size:16px;color:#6a55c4;letter-spacing:0.07px;">View activity</div>
<svg class="b" style="left:1837.0px;top:927.8px;" width="8" height="18" viewBox="0 0 8 18" fill="none"><g stroke="#848d98" stroke-width="1.1"><circle cx="4" cy="3.5" r="1.75"/><circle cx="4" cy="9" r="1.75"/><circle cx="4" cy="14.5" r="1.75"/></g></svg>
<div class="b" style="left:148.5px;top:975.0px;width:1812.5px;height:1.0px;background:#eceef1;"></div>
<div class="b" style="left:216.0px;top:995.4px;width:40.8px;height:40.8px;background:#5ec3d0;border-radius:50%;"></div>
<div class="t" style="left:223.7px;top:1007.0px;font-size:19px;color:#fff;">PS</div>
<div class="t" style="left:269.3px;top:998.0px;font-size:15px;color:#6a55c4;letter-spacing:-0.05px;width:107.4px;height:20.2px;overflow:hidden;">Pre soni naithani</div>
<div class="t" style="left:269.3px;top:1023.0px;font-size:13px;color:#66707c;letter-spacing:0.27px;width:107.4px;height:17.6px;overflow:hidden;">Sales</div>
<div class="t" style="left:417.4px;top:1008.0px;font-size:15px;color:#2f3541;letter-spacing:-0.05px;">Not Available</div>
<div class="t" style="left:667.7px;top:997.0px;font-size:15px;color:#2f3541;letter-spacing:-0.20px;width:210.0px;height:20.2px;overflow:hidden;">Sales</div>
<div class="t" style="left:667.7px;top:1023.0px;font-size:13px;color:#7d8692;letter-spacing:0.30px;">Ahemadabad</div>
<div class="t" style="left:918.3px;top:999.0px;font-size:15px;color:#2f3541;letter-spacing:-0.09px;">Custom Verifier 2</div>
<div class="t" style="left:918.3px;top:1023.0px;font-size:13px;color:#7d8692;letter-spacing:0.26px;">SpringVerifyNew</div>
<div class="t" style="left:1168.6px;top:998.0px;font-size:14px;color:#2f3541;letter-spacing:0.08px;">Riya Sethi</div>
<div class="t" style="left:1168.6px;top:1023.0px;font-size:13.5px;color:#7d8692;letter-spacing:0.29px;">05 Jan 2026</div>
<div class="b" style="left:1419.0px;top:989.8px;width:122.5px;height:24.4px;background:#fdf0e1;border-radius:12.2px;"></div>
<div class="t" style="left:1434.0px;top:995.0px;font-size:14.5px;color:#e99e4c;letter-spacing:-0.70px;">IN PROGRESS</div>
<div class="t" style="left:1429.3px;top:1024.0px;font-size:16px;color:#5c6470;letter-spacing:0.07px;">Verification initiated</div>
<div class="t" style="left:1732.0px;top:1008.0px;font-size:16px;color:#6a55c4;letter-spacing:0.07px;">View activity</div>
<svg class="b" style="left:1837.0px;top:1007.9px;" width="8" height="18" viewBox="0 0 8 18" fill="none"><g stroke="#848d98" stroke-width="1.1"><circle cx="4" cy="3.5" r="1.75"/><circle cx="4" cy="9" r="1.75"/><circle cx="4" cy="14.5" r="1.75"/></g></svg>
<div class="b" style="left:1903.2px;top:930.3px;width:59.5px;height:60.0px;background:#3a4253;border-radius:10px;"></div>
<svg class="b" style="left:1913.0px;top:941.0px;" width="40" height="40" viewBox="0 0 40 40" fill="none"><g fill="#fff"><path d="M9 4 L9.8 7.7 L13.5 8.5 L9.8 9.3 L9 13 L8.2 9.3 L4.5 8.5 L8.2 7.7 Z"/><path d="M29.5 3.8 L30.7 7.8 L34.7 9 L30.7 10.2 L29.5 14.2 L28.3 10.2 L24.3 9 L28.3 7.8 Z"/><path d="M9.3 20.5 L9.9 22.2 L11.6 22.8 L9.9 23.4 L9.3 25.1 L8.7 23.4 L7 22.8 L8.7 22.2 Z"/></g><path d="M18.2 15.5 L28.2 31" stroke="#fff" stroke-width="4.4" stroke-linecap="round"/><path d="M18.5 16 L19.8 18" stroke="#3a4253" stroke-width="1.2" stroke-linecap="round"/></svg>
<div class="b" style="left:1988.0px;top:0.0px;width:11.0px;height:1007.0px;background:#f3f4f6;"></div>
<div class="b" style="left:1989.0px;top:1.0px;width:10.0px;height:232.5px;background:#87919d;border-radius:5px;"></div>
<div class="b" style="left:0.0px;top:1006.0px;width:1999.0px;height:1.0px;background:#000;z-index:5;"></div>
</body></html>
